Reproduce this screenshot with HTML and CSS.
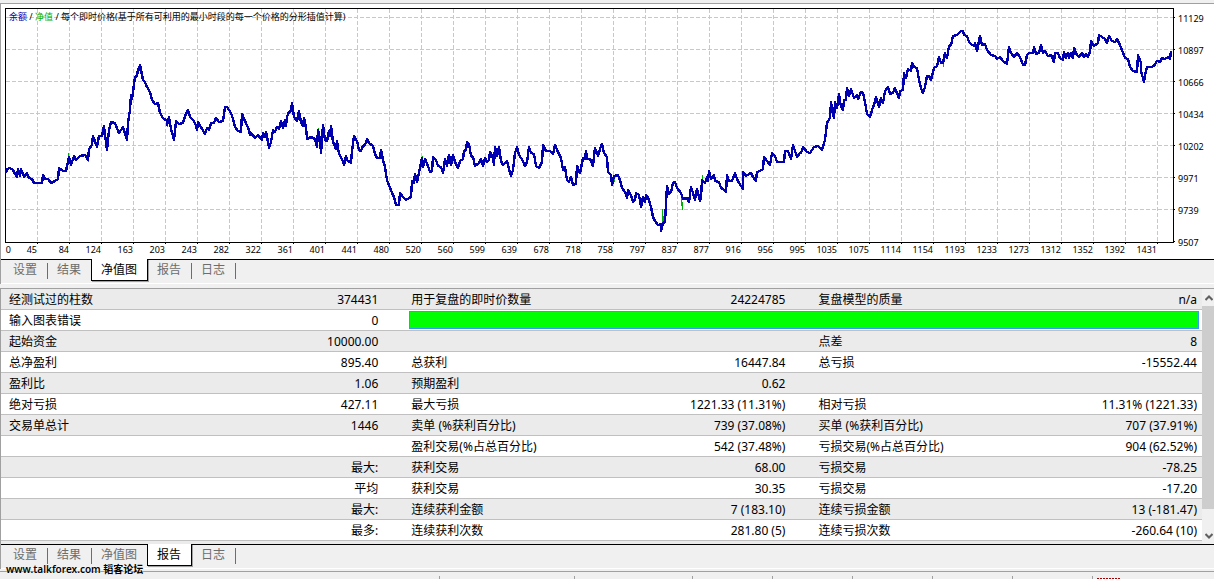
FILE: index.html
```html
<!DOCTYPE html>
<html lang="zh-CN">
<head>
<meta charset="utf-8">
<title>策略测试报告</title>
<link rel="stylesheet" href="styles.css">
</head>
<body>
<section class="panel panel-chart">
  <svg class="chart" viewBox="1 4 1213 255" role="img" aria-label="净值图">
    <defs>
      <pattern id="grid-v" x="37" y="9" width="32" height="6" patternUnits="userSpaceOnUse"><rect width="1" height="4" class="grid"/></pattern>
      <pattern id="grid-h" x="6" y="17" width="6" height="32" patternUnits="userSpaceOnUse"><rect width="4" height="1" class="grid"/></pattern>
      <pattern id="ticks-x" x="37" y="243" width="32" height="2" patternUnits="userSpaceOnUse"><rect width="1" height="2"/></pattern>
      <pattern id="ticks-y" x="1174" y="17" width="2" height="32" patternUnits="userSpaceOnUse"><rect width="2" height="1"/></pattern>
    </defs>
    <rect x="6" y="9" width="1167" height="232" fill="url(#grid-v)"/>
    <rect x="6" y="9" width="1167" height="232" fill="url(#grid-h)"/>
    <rect x="6" y="243" width="1167" height="1" fill="url(#ticks-x)"/>
    <rect x="1174" y="9" width="1" height="233" fill="url(#ticks-y)"/>
    <rect class="frame" x="5.5" y="8.5" width="1168" height="234"/>
    <path class="equity" d="M68.500 153V164M662.500 209V224M663.500 216V222M681.500 196V206M682.500 202V210M702.500 175V182M943.500 60V67M167.500 122V127M318.500 128V134M422.500 156V160M88.500 158V162M614.500 176V182"/>
    <polyline class="balance" points="6,173 7,169 10,168 13,170 15,174 17,177 18,169 20,176 21,169 24,177 27,173 29,178 32,179 34,183 42,183 43,175 45,179 48,179 51,183 55,181 58,179 59,168 63,171 66,171 67,166 69,157 71,165 74,156 76,160 80,156 85,155 88,160 89,149 92,145 93,136 97,147 99,136 102,136 104,126 105,135 107,150 109,130 111,122 115,123 119,133 123,127 127,140 128,123 130,110 131,95 132,99 135,77 137,76 138,69 139,70 140,65 141,70 143,80 145,82 147,87 150,92 152,100 155,104 158,103 160,113 163,118 167,121 167,125 169,117 171,129 174,140 176,121 179,124 183,123 185,116 188,110 190,117 193,120 196,125 197,130 198,122 201,127 205,134 207,128 209,130 211,123 214,123 216,118 219,122 223,121 225,107 227,107 231,113 233,119 235,127 238,131 241,132 242,114 245,121 249,130 250,135 251,133 255,138 258,135 262,140 263,133 265,137 266,132 268,142 269,148 271,142 273,130 275,132 277,127 279,129 281,121 283,128 285,120 286,126 287,117 289,112 291,111 292,103 294,117 297,121 299,111 301,122 303,126 304,118 306,128 307,137 307,139 311,137 315,139 317,147 318,130 320,139 321,153 323,125 325,140 327,141 329,131 330,136 331,126 333,142 336,149 337,141 339,154 342,159 344,165 346,156 347,160 351,163 352,151 354,136 357,141 359,150 361,151 363,146 365,145 367,139 369,143 373,146 375,154 377,158 380,158 381,150 383,160 385,167 387,180 389,185 392,193 394,197 396,205 399,205 400,193 403,197 406,200 411,197 412,181 414,183 415,174 417,182 419,173 421,163 422,158 423,167 425,159 428,166 430,172 432,171 433,157 436,160 438,166 441,167 443,173 445,159 447,166 449,155 451,165 453,155 455,162 458,168 460,161 463,159 464,151 466,150 467,142 469,144 471,156 473,157 475,166 479,163 481,159 483,166 485,158 487,162 489,160 490,152 493,158 494,165 495,147 497,156 499,147 501,161 503,165 507,161 509,169 511,176 513,170 515,153 517,147 519,155 523,161 525,166 527,162 529,147 531,153 534,154 536,166 539,168 542,162 543,145 546,151 550,151 553,154 555,145 558,152 561,158 563,170 565,167 567,180 569,182 571,177 573,185 576,184 577,166 580,173 583,158 585,159 586,151 587,159 590,159 593,166 595,148 598,156 600,149 602,144 604,153 607,157 608,172 611,175 612,185 614,176 618,175 620,180 622,188 625,192 627,198 628,190 631,195 633,202 635,200 636,193 639,195 641,207 643,197 645,202 646,195 648,197 651,207 653,217 655,221 658,225 661,224 661,231 663,223 665,222 666,203 667,186 669,194 671,192 673,183 675,182 677,188 681,193 683,199 687,198 689,202 691,187 693,193 695,200 697,189 700,201 701,197 702,180 705,183 707,177 708,181 709,171 711,179 714,175 715,181 719,182 721,188 723,189 726,192 727,175 729,181 732,181 735,173 737,179 739,183 743,189 743,172 746,176 751,173 753,177 756,181 757,172 760,171 763,169 764,157 767,161 770,165 772,153 775,156 777,162 780,162 784,162 785,151 788,151 791,159 793,145 797,157 800,153 801,153 803,147 807,152 810,153 814,147 818,146 822,150 825,140 827,123 830,118 831,102 834,118 835,102 837,108 839,94 841,107 843,110 844,100 846,100 847,88 849,96 851,89 854,98 857,95 858,99 861,92 863,93 865,102 867,114 870,117 872,110 874,105 876,97 879,107 881,98 883,103 885,91 888,87 890,94 893,93 895,88 899,98 900,91 903,90 904,73 906,78 908,69 911,71 912,63 914,67 917,68 919,80 921,88 923,93 925,87 927,76 929,76 931,80 934,68 937,66 939,57 941,63 943,63 945,53 947,58 949,46 951,45 953,36 957,35 961,31 963,31 964,35 967,36 969,42 971,44 974,46 975,43 977,51 980,36 982,45 985,44 987,50 991,55 995,56 997,59 1000,57 1003,61 1007,64 1009,47 1011,53 1014,57 1017,53 1020,57 1023,65 1025,65 1027,55 1029,53 1033,53 1034,47 1036,54 1039,53 1041,45 1043,53 1045,51 1048,56 1051,55 1054,62 1055,53 1058,53 1060,58 1063,60 1064,52 1066,58 1068,53 1069,58 1071,53 1073,58 1074,48 1077,55 1079,57 1082,53 1084,57 1086,54 1088,57 1090,52 1091,41 1094,46 1098,43 1099,35 1102,37 1105,39 1107,43 1109,36 1112,41 1115,42 1117,39 1119,43 1122,50 1125,58 1128,59 1130,67 1133,71 1137,72 1138,55 1141,63 1141,71 1144,82 1145,75 1147,67 1151,67 1154,66 1157,61 1160,62 1162,58 1165,59 1168,57 1170,59 1171,51"/>
    <text class="label" x="9" y="20"><tspan class="key-balance">余额</tspan> / <tspan class="key-equity">净值</tspan> / 每个即时价格(基于所有可利用的最小时段的每一个价格的分形插值计算)</text>
    <g class="label">
      <text x="1178" y="22">11129</text><text x="1178" y="54">10897</text><text x="1178" y="86">10666</text><text x="1178" y="118">10434</text><text x="1178" y="150">10202</text><text x="1178" y="182">9971</text><text x="1178" y="214">9739</text><text x="1178" y="246">9507</text>
    </g>
    <g class="label label-x">
      <text x="11" y="253">0</text><text x="37" y="253">45</text><text x="69" y="253">84</text><text x="101" y="253">124</text><text x="133" y="253">163</text><text x="165" y="253">203</text><text x="197" y="253">243</text><text x="229" y="253">282</text><text x="261" y="253">322</text><text x="293" y="253">361</text><text x="325" y="253">401</text><text x="357" y="253">441</text><text x="389" y="253">480</text><text x="421" y="253">520</text><text x="453" y="253">560</text><text x="485" y="253">599</text><text x="517" y="253">639</text><text x="549" y="253">678</text><text x="581" y="253">718</text><text x="613" y="253">758</text><text x="645" y="253">797</text><text x="677" y="253">837</text><text x="709" y="253">877</text><text x="741" y="253">916</text><text x="773" y="253">956</text><text x="805" y="253">995</text><text x="837" y="253">1035</text><text x="869" y="253">1075</text><text x="901" y="253">1114</text><text x="933" y="253">1154</text><text x="965" y="253">1193</text><text x="997" y="253">1233</text><text x="1029" y="253">1273</text><text x="1061" y="253">1312</text><text x="1093" y="253">1352</text><text x="1125" y="253">1392</text><text x="1157" y="253">1431</text>
    </g>
  </svg>
  <nav class="tabs" aria-label="图表视图">
    <button class="tab">设置</button><button class="tab before-active">结果</button><button class="tab active">净值图</button><button class="tab">报告</button><button class="tab">日志</button>
  </nav>
</section>

<section class="panel panel-report">
  <div class="report">
    <div class="viewport">
      <table class="results">
        <colgroup><col class="c-label"><col class="c-label"><col class="c-mid"><col class="c-mid"><col class="c-last"><col class="c-last"></colgroup>
        <tbody>
        <tr><td>经测试过的柱数</td><td class="num">374431</td><td>用于复盘的即时价数量</td><td class="num">24224785</td><td>复盘模型的质量</td><td class="num end">n/a</td></tr>
        <tr><td>输入图表错误</td><td class="num">0</td><td class="quality" colspan="4"><div class="bar"></div></td></tr>
        <tr><td>起始资金</td><td class="num">10000.00</td><td></td><td></td><td>点差</td><td class="num end">8</td></tr>
        <tr><td>总净盈利</td><td class="num">895.40</td><td>总获利</td><td class="num">16447.84</td><td>总亏损</td><td class="num end">-15552.44</td></tr>
        <tr><td>盈利比</td><td class="num">1.06</td><td>预期盈利</td><td class="num">0.62</td><td></td><td></td></tr>
        <tr><td>绝对亏损</td><td class="num">427.11</td><td>最大亏损</td><td class="num">1221.33 (11.31%)</td><td>相对亏损</td><td class="num end">11.31% (1221.33)</td></tr>
        <tr><td>交易单总计</td><td class="num">1446</td><td>卖单 (%获利百分比)</td><td class="num">739 (37.08%)</td><td>买单 (%获利百分比)</td><td class="num end">707 (37.91%)</td></tr>
        <tr><td></td><td></td><td>盈利交易(%占总百分比)</td><td class="num">542 (37.48%)</td><td>亏损交易(%占总百分比)</td><td class="num end">904 (62.52%)</td></tr>
        <tr><td></td><td class="num">最大:</td><td>获利交易</td><td class="num">68.00</td><td>亏损交易</td><td class="num end">-78.25</td></tr>
        <tr><td></td><td class="num">平均</td><td>获利交易</td><td class="num">30.35</td><td>亏损交易</td><td class="num end">-17.20</td></tr>
        <tr><td></td><td class="num">最大:</td><td>连续获利金额</td><td class="num">7 (183.10)</td><td>连续亏损金额</td><td class="num end">13 (-181.47)</td></tr>
        <tr><td></td><td class="num">最多:</td><td>连续获利次数</td><td class="num">281.80 (5)</td><td>连续亏损次数</td><td class="num end">-260.64 (10)</td></tr>
        </tbody>
      </table>
    </div>
    <div class="scrollbar">
      <button class="arrow" aria-label="向上滚动"><svg width="8" height="6" viewBox="0 0 8 6"><path d="M0.500 5L4 1.500L7.500 5"/></svg></button>
      <div class="track"><div class="thumb"></div></div>
      <button class="arrow" aria-label="向下滚动"><svg width="8" height="6" viewBox="0 0 8 6"><path d="M0.500 1L4 4.500L7.500 1"/></svg></button>
    </div>
  </div>
  <nav class="tabs" aria-label="报告视图">
    <button class="tab">设置</button><button class="tab">结果</button><button class="tab before-active">净值图</button><button class="tab active">报告</button><button class="tab">日志</button>
  </nav>
</section>

<footer class="status">
  <span class="watermark">www.talkforex.com 韬客论坛</span>
  <span class="cell cell-main"></span><span class="cell cell-wide"></span><span class="cell cell-mid"></span><span class="cell"></span><span class="cell"></span><span class="cell"></span><span class="cell"></span><span class="cell"></span><span class="traffic"></span>
</footer>
</body>
</html>
```
FILE: styles.css
```css
* { box-sizing: border-box; }

body {
  margin: 0;
  padding-top: 3px;
  min-height: 100vh;
  display: flex;
  flex-direction: column;
  position: relative;
  overflow: hidden;
  background: #f0f0f0;
  color: #000;
  font: 12px/20px "Noto Sans", "Noto Sans CJK SC", sans-serif;
}

button {
  margin: 0;
  padding: 0;
  border: 0;
  background: none;
  font: inherit;
  color: inherit;
}

.panel {
  border-top: 1px solid #a0a0a0;
  border-left: 1px solid #a0a0a0;
}

.panel-chart { margin-bottom: 4px; }

/* Chart */
.chart {
  display: block;
  width: 100%;
  height: auto;
  background: #fff;
}

.grid { fill: #c8c8c8; }
.frame { fill: none; stroke: #000; shape-rendering: crispEdges; }
.equity { fill: none; stroke: #00b000; shape-rendering: crispEdges; }
.balance { fill: none; stroke: #0000b0; stroke-width: 2.4; stroke-linejoin: round; shape-rendering: crispEdges; }
.label { font-size: 9px; fill: #000; }
.label-x { text-anchor: end; }
.key-balance { fill: #0000b0; }
.key-equity { fill: #00b000; }

/* Tabs */
.tabs {
  display: flex;
  height: 25px;
  padding-left: 3px;
  border-top: 1px solid #000;
  border-bottom: 1px solid #fff;
}

.tab {
  height: 20px;
  padding: 0 11px 0 9px;
  color: #6d6d6d;
  background: linear-gradient(#6d6d6d, #6d6d6d) right 3px / 1px 16px no-repeat;
}

.tab.before-active { background: none; }

.tab.active {
  height: 22px;
  margin: -1px 0 0 -1px;
  padding: 1px 10px 1px 9px;
  border: 1px solid #000;
  border-top: 0;
  background: #fff;
  color: #000;
  box-shadow: 1px 1px 0 #a0a0a0;
}

/* Report table */
.report { display: flex; }

.viewport {
  flex: 1;
  padding-bottom: 3px;
  background: #ebebeb;
}

.results {
  width: 100%;
  table-layout: fixed;
  border-collapse: separate;
  border-spacing: 0;
}

.c-label { width: 16.75%; }
.c-mid { width: 16.95%; }
.c-last { width: 16.3%; }

.results tr { background: #ebebeb; }
.results tr:nth-child(even) { background: #fff; }

.results td {
  height: 21px;
  padding: 1px 0 0 8px;
  line-height: 19px;
  border-bottom: 1px solid #c0c0c0;
  white-space: nowrap;
}

.results .num { padding: 1px 25px 0 0; text-align: right; }
.results .end { padding-right: 5px; }
.results .quality { padding: 0 3px 0 6px; }

.bar {
  height: 18px;
  border: 1px solid #3399ff;
  background: #00ff00;
}

.scrollbar {
  width: 12px;
  display: flex;
  flex-direction: column;
  overflow: hidden;
}

.arrow {
  flex: 0 0 17px;
  width: 14px;
  display: flex;
  align-items: center;
  justify-content: center;
}

.arrow path { fill: none; stroke: #606060; stroke-width: 2; }
.track { flex: 1; }
.thumb { height: 92%; background: #cdcdcd; }

/* Status bar */
.status {
  flex: 1;
  margin-top: 2px;
  display: flex;
  min-height: 8px;
  padding-top: 4px;
  border-top: 1px solid #a0a0a0;
  position: relative;
}

.cell {
  width: 80px;
  border-right: 1px solid #a0a0a0;
}

.cell-main { width: 440px; }
.cell-wide { width: 135px; }
.cell-mid { width: 118px; }

.traffic {
  width: 23px;
  height: 1px;
  margin: 2px 0 0 4px;
  background: repeating-linear-gradient(90deg, #a00000 0 2px, transparent 2px 3px);
}

.watermark {
  position: absolute;
  left: 6px;
  bottom: 3px;
  font-size: 10px;
  line-height: 14px;
  font-weight: 600;
  text-shadow: 0 0 1px #fff, 0 0 1px #fff;
}
```
